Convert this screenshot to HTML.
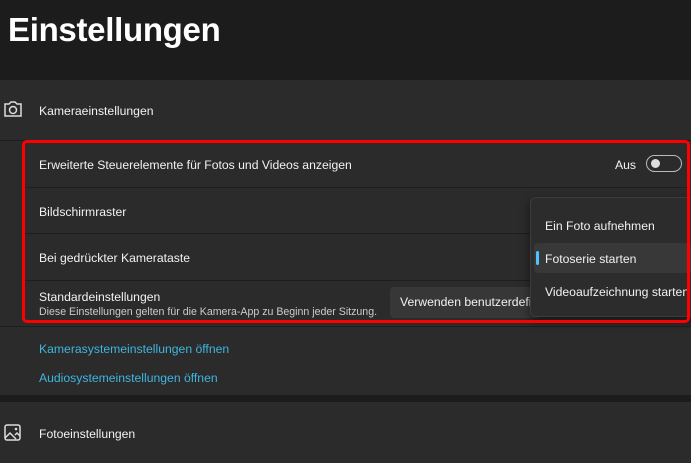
<!DOCTYPE html><html><head><style>
body{margin:0;width:691px;height:463px;background:#1c1c1c;font-family:"Liberation Sans",sans-serif;color:#fff;position:relative;overflow:hidden}
.a{position:absolute}
.t{font-size:12.2px;color:#f2f2f2}
.sep{position:absolute;left:22px;right:0;height:1px;background:#1e1e1e}
</style></head><body>
<div class="a" style="left:8px;top:11px;font-size:33px;font-weight:bold;letter-spacing:-0.3px">Einstellungen</div>
<div class="a" style="left:0;top:80px;width:691px;height:315px;background:#2b2b2b"></div>
<div class="a" style="left:0;top:140px;width:691px;height:1px;background:#1e1e1e"></div>
<div class="sep" style="top:187px"></div><div class="sep" style="top:233px"></div><div class="sep" style="top:280px"></div>
<div class="a" style="left:0;top:326px;width:691px;height:1px;background:#1e1e1e"></div>
<svg class="a" style="left:3px;top:100px" width="20" height="18" viewBox="0 0 20 18"><path d="M2 4h4l2-2h4l2 2h4v12H2z" fill="none" stroke="#ddd" stroke-width="1.5"/><circle cx="10" cy="10" r="3.5" fill="none" stroke="#ddd" stroke-width="1.5"/></svg>
<div class="a t" style="left:39px;top:104px">Kameraeinstellungen</div>
<div class="a t" style="left:39px;top:158px">Erweiterte Steuerelemente für Fotos und Videos anzeigen</div>
<div class="a t" style="left:615px;top:158px">Aus</div>
<div class="a" style="left:646px;top:155px;width:36px;height:17px;border:1px solid #bbb;border-radius:9px;box-sizing:border-box"></div>
<div class="a" style="left:651px;top:159px;width:9px;height:9px;border-radius:50%;background:#ddd"></div>
<div class="a t" style="left:39px;top:205px">Bildschirmraster</div>
<div class="a t" style="left:39px;top:251px">Bei gedrückter Kamerataste</div>
<div class="a t" style="left:39px;top:290px">Standardeinstellungen</div>
<div class="a" style="left:39px;top:306px;font-size:10.6px;color:#ccc">Diese Einstellungen gelten für die Kamera-App zu Beginn jeder Sitzung.</div>
<div class="a t" style="left:390px;top:287px;width:150px;height:31px;background:#373737;border-radius:4px;box-sizing:border-box;padding:8px 0 0 10px;overflow:hidden;white-space:nowrap">Verwenden benutzerdefinierter</div>
<div class="a" style="left:530px;top:197px;width:170px;height:118px;background:#2c2c2c;border:1px solid #3c3c3c;border-radius:6px;box-shadow:0 4px 10px rgba(0,0,0,.5)"></div>
<div class="a t" style="left:545px;top:219px">Ein Foto aufnehmen</div>
<div class="a" style="left:534px;top:243px;width:160px;height:30px;background:#383838;border-radius:4px"></div>
<div class="a" style="left:536px;top:251px;width:3px;height:14px;background:#4cc2ff;border-radius:2px"></div>
<div class="a t" style="left:545px;top:252px">Fotoserie starten</div>
<div class="a t" style="left:545px;top:285px;white-space:nowrap">Videoaufzeichnung starten</div>
<div class="a" style="left:22px;top:140px;width:668px;height:183px;border:3px solid #f00;border-radius:5px;box-sizing:border-box"></div>
<div class="a" style="left:39px;top:342px;font-size:12.2px;color:#3fb6e0">Kamerasystemeinstellungen öffnen</div>
<div class="a" style="left:39px;top:371px;font-size:12.2px;color:#3fb6e0">Audiosystemeinstellungen öffnen</div>
<div class="a" style="left:0;top:402px;width:691px;height:61px;background:#2b2b2b"></div>
<svg class="a" style="left:4px;top:424px" width="18" height="18" viewBox="0 0 18 18"><rect x="1" y="1" width="15" height="15" rx="2" fill="none" stroke="#ddd" stroke-width="1.5"/><path d="M1 14l5-5 6 6M11 11l2-2 3 3" fill="none" stroke="#ddd" stroke-width="1.5"/><circle cx="12" cy="5" r="1.3" fill="#ddd"/></svg>
<div class="a t" style="left:39px;top:427px">Fotoeinstellungen</div>
</body></html>
